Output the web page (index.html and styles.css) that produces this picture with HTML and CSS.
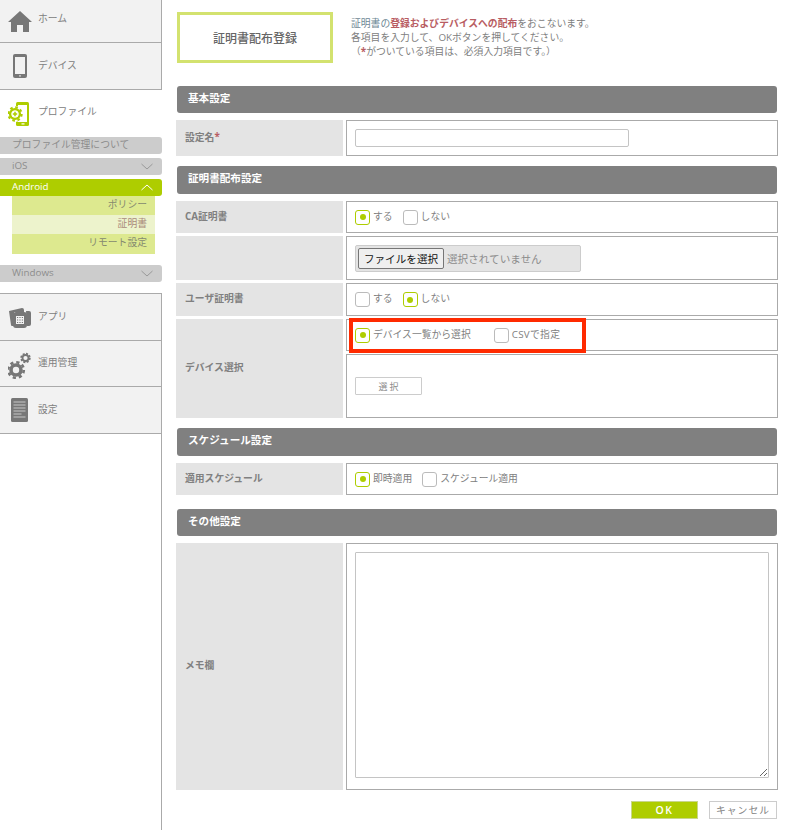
FILE: index.html
```html
<!DOCTYPE html>
<html lang="ja">
<head>
<meta charset="utf-8">
<title>証明書配布登録</title>
<link rel="stylesheet" href="styles.css">
</head>
<body>
<div class="page">
  <aside class="sidebar">
    <a class="nav nav-home">
      <svg class="ico" width="24" height="21" viewBox="0 0 24 21"><path fill="#777" d="M12 0 24 11h-3v10h-6v-7H9v7H3V11H0z"/></svg>
      <span>ホーム</span>
    </a>
    <a class="nav nav-device">
      <svg class="ico" width="24" height="24" viewBox="0 0 24 24"><rect x="5" y="0" width="14" height="24" rx="2" fill="#777"/><rect x="7" y="3" width="10" height="17" fill="#f2f2f2"/><rect x="11" y="21.3" width="2" height="1.2" fill="#ddd"/></svg>
      <span>デバイス</span>
    </a>
    <a class="nav nav-profile">
      <svg class="ico" width="24" height="24" viewBox="0 0 24 24"><rect x="8" y="0" width="13" height="24" rx="1.5" fill="#aecd00"/><rect x="10" y="3" width="9" height="17" fill="#fff"/><rect x="13.500" y="21.3" width="3" height="1.2" fill="#fff"/><circle cx="7" cy="12" r="8" fill="#fff"/><circle cx="7" cy="12" r="6.600" fill="none" stroke="#aecd00" stroke-width="2.200" stroke-dasharray="2.600 2.580"/><circle cx="7" cy="12" r="4.800" fill="none" stroke="#aecd00" stroke-width="2.600"/><circle cx="7" cy="12" r="3.500" fill="#fff"/><path d="M7 9.800v4.400M4.800 12h4.400" stroke="#aecd00" stroke-width="1.500"/></svg>
      <span>プロファイル</span>
    </a>
    <div class="menu">
      <div class="menu-bar"><span class="bar-text">プロファイル管理について</span></div>
      <div class="menu-bar"><span class="bar-text">iOS</span><svg class="chev" width="12" height="7" viewBox="0 0 12 7"><path d="M.5 1 6 6 11.500 1" fill="none" stroke="#999" stroke-width="1"/></svg></div>
      <div class="menu-bar menu-on"><span class="bar-text">Android</span><svg class="chev" width="12" height="7" viewBox="0 0 12 7"><path d="M.5 6 6 1 11.500 6" fill="none" stroke="#fff" stroke-width="1"/></svg></div>
      <div class="submenu">
        <div class="sub">ポリシー</div>
        <div class="sub sub-on">証明書</div>
        <div class="sub sub-last">リモート設定</div>
      </div>
      <div class="menu-bar menu-win"><span class="bar-text">Windows</span><svg class="chev" width="12" height="7" viewBox="0 0 12 7"><path d="M.5 1 6 6 11.500 1" fill="none" stroke="#999" stroke-width="1"/></svg></div>
    </div>
    <a class="nav nav-app">
      <svg class="ico" width="24" height="24" viewBox="0 0 24 24"><path fill="#777" d="M1 6 14 3q2 0 2 2v2H6v14H4q-1 0-1-1z"/><path fill="#777" d="M18 6h3q2 0 2 2v11q0 2-2 2h-2z"/><rect x="5" y="7" width="14" height="16" rx="3" fill="#777"/><rect x="8" y="11" width="8" height="8" fill="#f2f2f2"/><path d="M9 12.500h6M9 15h6M9 17.500h6" stroke="#777" stroke-width="1" stroke-dasharray="1.200 1.200"/></svg>
      <span>アプリ</span>
    </a>
    <a class="nav nav-ops">
      <svg class="ico" width="24" height="30" viewBox="0 0 24 30"><circle cx="8" cy="21" r="7.800" fill="none" stroke="#777" stroke-width="2.600" stroke-dasharray="3.200 2.930"/><circle cx="8" cy="21" r="5" fill="none" stroke="#777" stroke-width="3.600"/><circle cx="17.500" cy="9" r="4.300" fill="none" stroke="#777" stroke-width="1.800" stroke-dasharray="2 1.370"/><circle cx="17.500" cy="9" r="3" fill="none" stroke="#777" stroke-width="1.800"/></svg>
      <span>運用管理</span>
    </a>
    <a class="nav nav-set">
      <svg class="ico" width="24" height="24" viewBox="0 0 24 24"><rect x="3" y="0" width="17" height="24" rx="1.500" fill="#777"/><path d="M5.500 4h12M5.500 7h12M5.500 10h12M5.500 13h12M5.500 16h8M5.500 19h12" stroke="#c8c8c8" stroke-width="1"/></svg>
      <span>設定</span>
    </a>
    <div class="side-rest"></div>
  </aside>

  <main class="main">
    <div class="top">
      <h1 class="title">証明書配布登録</h1>
      <p class="intro"><span class="intro-blue">証明書の</span><strong>登録およびデバイスへの配布</strong>をおこないます。<br>各項目を入力して、OKボタンを押してください。<br>（<b class="star">*</b>がついている項目は、必須入力項目です。）</p>
    </div>

    <h2 class="head head-a">基本設定</h2>
    <div class="form">
      <div class="label">設定名<b class="star">*</b></div>
      <div class="value h36"><input class="text" type="text"></div>
    </div>

    <h2 class="head head-b">証明書配布設定</h2>
    <div class="form">
      <div class="label">CA証明書</div>
      <div class="value h32">
        <label class="opt"><i class="radio on"></i>する</label>
        <label class="opt"><i class="radio"></i>しない</label>
      </div>
      <div class="label"></div>
      <div class="value h44">
        <div class="file"><button class="file-btn" type="button">ファイルを選択</button><span class="file-name">選択されていません</span></div>
      </div>
      <div class="label">ユーザ証明書</div>
      <div class="value h33">
        <label class="opt"><i class="radio"></i>する</label>
        <label class="opt"><i class="radio on"></i>しない</label>
      </div>
      <div class="label label-device">デバイス選択</div>
      <div class="value h32 device-mode">
        <label class="opt opt-wide"><i class="radio on"></i>デバイス一覧から選択</label>
        <label class="opt opt-csv"><i class="radio"></i>CSVで指定</label>
        <div class="marker"></div>
      </div>
      <div class="value h64"><button class="pick" type="button">選 択</button></div>
    </div>

    <h2 class="head head-b">スケジュール設定</h2>
    <div class="form">
      <div class="label">適用スケジュール</div>
      <div class="value h32">
        <label class="opt"><i class="radio on"></i>即時適用</label>
        <label class="opt"><i class="radio"></i>スケジュール適用</label>
      </div>
    </div>

    <h2 class="head head-a head-other">その他設定</h2>
    <div class="form">
      <div class="label">メモ欄</div>
      <div class="value memo"><textarea class="area"></textarea></div>
    </div>

    <div class="actions">
      <button class="ok" type="button">OK</button>
      <button class="cancel" type="button">キャンセル</button>
    </div>
  </main>
</div>
</body>
</html>
```

FILE: styles.css
```css
* { box-sizing: border-box; }
html, body { margin: 0; padding: 0; background: #fff; }
body {
  font-family: "Open Sans", "Noto Sans CJK JP", sans-serif;
  font-size: 9.800px;
  color: #808080;
  overflow: hidden;
}
.page { display: flex; width: 806px; height: 830px; }

/* sidebar */
.sidebar { width: 162px; flex: none; display: flex; flex-direction: column; }
.nav {
  display: flex;
  align-items: center;
  gap: 6px;
  padding-left: 8px;
  background: #f2f2f2;
  border-right: 1px solid #aaa;
  border-bottom: 1px solid #aaa;
}
.nav span { position: relative; top: -1px; }
.ico { flex: none; }
.nav-home { height: 43px; }
.nav-home span { top: -3px; }
.nav-device { height: 47px; }
.nav-device span { top: -1px; }
.nav-profile { height: 47px; background: #fff; border: 0; }
.nav-profile span { top: -3px; }
.nav-app { height: 48px; border-top: 1px solid #aaa; margin-top: 11px; }
.nav-ops { height: 46px; }
.nav-ops span { top: -2px; }
.nav-set { height: 47px; }
.side-rest { flex: 1; border-right: 1px solid #aaa; }

.menu { display: flex; flex-direction: column; }
.menu-bar {
  height: 17px;
  margin-bottom: 4px;
  padding-left: 12px;
  background: #ccc;
  border-radius: 0 3px 3px 0;
  display: flex;
  align-items: center;
  justify-content: space-between;
  color: #8c8c8c;
}
.bar-text { line-height: 15px; margin-bottom: 2px; }
.chev { margin-right: 9px; }
.menu-on { margin-bottom: 0; background: #aecd00; color: #fff; }
.menu-win { margin-bottom: 0; }
.submenu { margin: 0 7px 11px 12px; background: #dde98f; }
.sub { height: 19px; line-height: 17px; padding-right: 8px; text-align: right; color: #858a70; }
.sub-on { background: #edf3cc; color: #a98a7a; }
.sub-last { height: 20px; }

/* main */
.main { width: 616px; padding: 12px 0 0 14px; }
.top { display: flex; margin: 0 0 23px 1px; }
.title {
  width: 156px;
  height: 51px;
  margin: 0 18px 0 0;
  border: 3px solid #d3e26f;
  display: flex;
  align-items: center;
  justify-content: center;
  font-size: 12px;
  font-weight: 500;
  color: #666;
}
.intro { margin: 4.500px 0 0; line-height: 14px; color: #808080; }
.intro strong { color: #b85c62; font-weight: 700; }
.intro-blue { color: #6e8794; }
.star { color: #b85c62; font-weight: 700; }

.head {
  width: 600px;
  margin: 0 0 7px 1px;
  padding: 0 0 5px 11px;
  background: #808080;
  border-radius: 3px;
  color: #fff;
  font-size: 10.600px;
  font-weight: 700;
  display: flex;
  align-items: center;
}
.head-a { height: 27px; }
.head-b { height: 28px; margin-top: 10px; }
.head-other { margin-top: 14px; }

.form { display: grid; grid-template-columns: 167px 432px; column-gap: 3px; row-gap: 3px; }
.label {
  background: #e4e4e4;
  padding: 0 0 3px 9px;
  display: flex;
  align-items: center;
  font-weight: 700;
  color: #808080;
}
.label-device { grid-row: span 2; }
.value {
  border: 1px solid #aaa;
  padding-left: 8px;
  display: flex;
  align-items: center;
  background: #fff;
}
.h32 { height: 32px; }
.h33 { height: 33px; }
.h36 { height: 36px; }
.h44 { height: 44px; }
.h64 { height: 64px; }
.memo { height: 247px; align-items: flex-start; padding-top: 8px; }

.text { width: 274px; height: 18px; border: 1px solid #c4c4c4; border-radius: 2px; padding: 0; background: #fff; }
.opt { display: flex; align-items: flex-start; gap: 3px; margin-right: 10px; line-height: 14px; height: 15px; }
.opt-wide { margin-right: 23px; }
.opt-csv { letter-spacing: .3px; }
.radio { width: 15px; height: 15px; flex: none; border: 1px solid #bbb; border-radius: 3px; background: #fff; position: relative; }
.radio.on { border-color: #aecd00; }
.radio.on::after {
  content: "";
  position: absolute;
  left: 3.500px;
  top: 3.500px;
  width: 6px;
  height: 6px;
  border-radius: 50%;
  background: #aecd00;
}

.file {
  width: 226px;
  height: 27px;
  background: #e4e4e4;
  border: 1px solid #ccc;
  border-radius: 2px;
  display: flex;
  align-items: center;
  padding-left: 2px;
}
.file-btn {
  width: 86px;
  height: 21px;
  padding: 0;
  border: 1px solid #767676;
  border-radius: 2px;
  background: #efefef;
  color: #111;
  font: 10.600px "Noto Sans CJK JP", sans-serif;
}
.file-name { margin-left: 3px; font-size: 10.600px; color: #8c8c8c; }

.device-mode { position: relative; }
.marker {
  position: absolute;
  left: 2px;
  top: -2px;
  width: 237px;
  height: 35px;
  border: 4px solid #ff2a00;
}
.pick {
  width: 67px;
  height: 18px;
  padding: 0;
  border: 1px solid #ccc;
  border-radius: 1px;
  background: #fff;
  color: #8c8c8c;
  font: 9px "Noto Sans CJK JP", sans-serif;
}
.area { width: 414px; height: 226px; border: 1px solid #c4c4c4; border-radius: 1px; background: #fff; padding: 0; }

.actions { display: flex; justify-content: flex-end; gap: 11px; width: 601px; margin-top: 11px; }
.ok, .cancel { height: 18px; padding: 0; }
.ok { width: 67px; border: 1px solid #c8d68a; background: #aecd00; color: #fff; font: 600 10.500px "Open Sans", sans-serif; letter-spacing: 1.500px; }
.cancel { width: 68px; border: 1px solid #ccc; background: #fff; color: #808080; font: 9.800px "Noto Sans CJK JP", sans-serif; letter-spacing: 1px; }
```
